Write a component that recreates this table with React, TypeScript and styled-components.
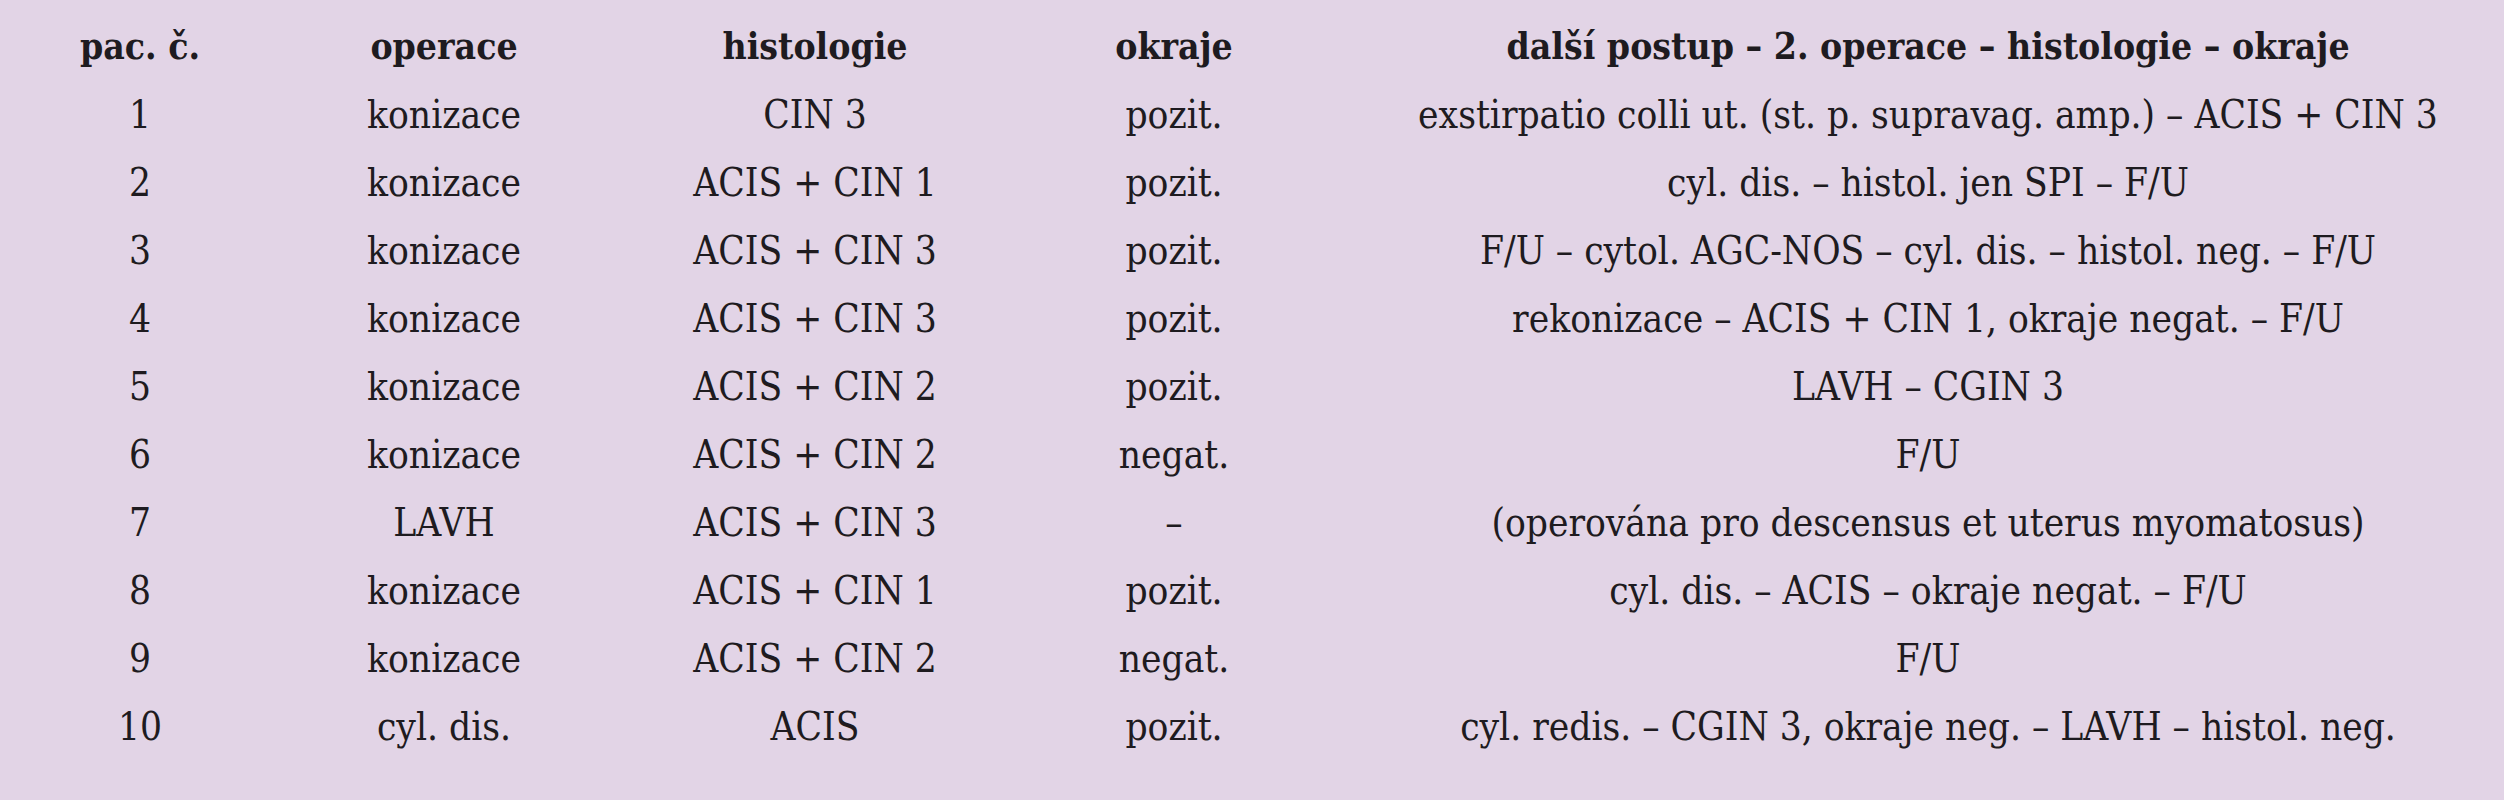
import React from "react";
import styled, { createGlobalStyle } from "styled-components";

const GlobalStyle = createGlobalStyle`
  html, body {
    margin: 0;
    padding: 0;
    background: #e2d4e6;
  }
`;

const Page = styled.div`
  width: 2504px;
  height: 800px;
  background: #e2d4e6;
  padding-top: 10px;
  box-sizing: border-box;
  overflow: hidden;
`;

const Table = styled.div`
  display: grid;
  grid-template-columns: 280px 328px 414px 304px 1fr;
  grid-template-rows: 71px;
  grid-auto-rows: 68px;
  color: #1e1b20;
  font-family: "DejaVu Serif Condensed", "DejaVu Serif", serif;
  font-stretch: condensed;
`;

const Cell = styled.div<{ $head?: boolean; $wide?: boolean }>`
  display: flex;
  align-items: center;
  justify-content: center;
  white-space: nowrap;
  font-size: ${({ $head }) => ($head ? "37px" : "38.5px")};
  font-weight: ${({ $head }) => ($head ? 700 : 400)};
  line-height: 68px;
  padding-left: ${({ $wide }) => ($wide ? "26px" : "0")};
`;

const header = [
  "pac. č.",
  "operace",
  "histologie",
  "okraje",
  "další postup – 2. operace – histologie – okraje",
];

const rows: string[][] = [
  ["1", "konizace", "CIN 3", "pozit.", "exstirpatio colli ut. (st. p. supravag. amp.) – ACIS + CIN 3"],
  ["2", "konizace", "ACIS + CIN 1", "pozit.", "cyl. dis. – histol. jen SPI – F/U"],
  ["3", "konizace", "ACIS + CIN 3", "pozit.", "F/U – cytol. AGC-NOS – cyl. dis. – histol. neg. – F/U"],
  ["4", "konizace", "ACIS + CIN 3", "pozit.", "rekonizace – ACIS + CIN 1, okraje negat. – F/U"],
  ["5", "konizace", "ACIS + CIN 2", "pozit.", "LAVH – CGIN 3"],
  ["6", "konizace", "ACIS + CIN 2", "negat.", "F/U"],
  ["7", "LAVH", "ACIS + CIN 3", "–", "(operována pro descensus et uterus myomatosus)"],
  ["8", "konizace", "ACIS + CIN 1", "pozit.", "cyl. dis. – ACIS – okraje negat. – F/U"],
  ["9", "konizace", "ACIS + CIN 2", "negat.", "F/U"],
  ["10", "cyl. dis.", "ACIS", "pozit.", "cyl. redis. – CGIN 3, okraje neg. – LAVH – histol. neg."],
];

export default function App() {
  return (
    <>
      <GlobalStyle />
      <Page>
        <Table>
          {header.map((h, i) => (
            <Cell key={h} $head $wide={i === 4}>
              {h}
            </Cell>
          ))}
          {rows.map((row, r) =>
            row.map((c, i) => (
              <Cell key={`${r}-${i}`} $wide={i === 4}>
                {c}
              </Cell>
            ))
          )}
        </Table>
      </Page>
    </>
  );
}
